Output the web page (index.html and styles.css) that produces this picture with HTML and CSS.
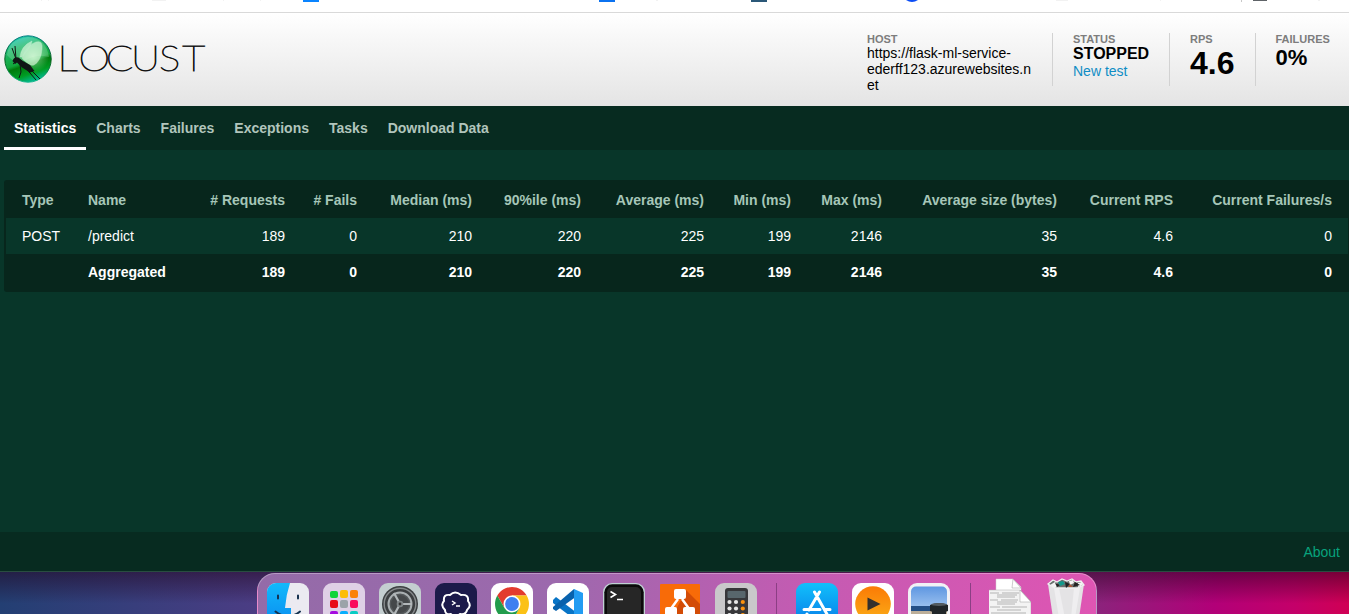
FILE: index.html
```
<!DOCTYPE html>
<html lang="en">
<head>
<meta charset="utf-8">
<title>Locust</title>
<link rel="stylesheet" href="styles.css">
</head>
<body>
<div class="screen">
  <div class="bookmarks">
    <svg class="bookmark-edges" viewBox="0 0 1349 3" shape-rendering="crispEdges">
      <path fill="#f2f2f2" d="M41 0h1v1h-1zM48 0h1v1h-1zM152 0h14v1h-14zM223 0h1v1h-1zM260 0h1v1h-1zM656 0h2v1h-2zM1056 0h12v1h-12zM1160 0h1v1h-1zM1318 0h2v1h-2z"/>
      <path fill="#0a84ff" d="M303 0h16v2h-16z"/>
      <path fill="#0b72f0" d="M599 0h16v2h-16z"/>
      <path fill="#2b5878" d="M751 0h16v2h-16z"/>
      <path fill="#0b4df5" shape-rendering="auto" d="M906 0h12q-6 4-12 0z"/>
      <path fill="#c8c8c8" d="M1241 0h1v2h-1z"/>
      <path fill="#5f6368" d="M1253 0h14v1h-14z"/>
    </svg>
  </div>
  <header class="top">
    <svg class="logo" width="206" height="60" viewBox="0 0 206 60">
      <defs>
        <linearGradient id="orb" x1=".25" y1="0" x2=".6" y2="1">
          <stop offset="0" stop-color="#20c9bd"/><stop offset=".25" stop-color="#20b96a"/>
          <stop offset=".56" stop-color="#12a63b"/><stop offset=".63" stop-color="#007a0c"/>
          <stop offset=".82" stop-color="#009c24"/><stop offset="1" stop-color="#00bd9d"/>
        </linearGradient>
        <radialGradient id="shine" cx=".62" cy=".45" r=".36">
          <stop offset="0" stop-color="#b7f3bd" stop-opacity=".75"/><stop offset="1" stop-color="#7bde98" stop-opacity="0"/>
        </radialGradient>
        <linearGradient id="rim" x1="0" y1="0" x2="0" y2="1">
          <stop offset="0" stop-color="#087f86"/><stop offset=".55" stop-color="#035c18"/><stop offset="1" stop-color="#17b98d"/>
        </linearGradient>
      </defs>
      <circle cx="28" cy="29" r="23.2" fill="url(#orb)" stroke="url(#rim)" stroke-width="1"/>
      <circle cx="28" cy="29" r="22" fill="url(#shine)"/>
      <path fill="#fff" opacity=".18" d="M7 25Q9 9 28 7Q46 8 49 27Q36 24 28 29Q17 37 7 25z"/>
      <path fill="#dffbe0" opacity=".65" stroke="#f2fff2" stroke-width=".5" d="M20 27Q21 16 32 11Q32 15 22 27zM22 28Q27 15 36 12Q43 10 42 19Q41 31 34 35Q30 37 22 28z"/>
      <path fill="#101615" d="M12.5 31Q14 26 18.5 27.500L23 31L30 35L34.500 41L30 42.500L22 37.500L17 32.500L15 34z"/>
      <path fill="none" stroke="#101615" stroke-width="1" d="M16 29L12 18M16 29L15 16M20 34L21 42L19 48M24 36L36 50M28 37L40 49M17 31L13 34"/>
      <g class="wordmark" transform="translate(0 41.3) scale(1.12 1)"><text x="51.300 70 94.500 117 142 162.700">LOCUST</text></g>
    </svg>
    <div class="boxes">
      <div class="box host"><div class="label">HOST</div><div class="url">https://flask-ml-service-ederff123.azurewebsites.net</div></div>
      <div class="box status"><div class="label">STATUS</div><div class="state">STOPPED</div><a class="new-test">New test</a></div>
      <div class="box rps"><div class="label">RPS</div><div class="rps-value">4.6</div></div>
      <div class="box fails"><div class="label">FAILURES</div><div class="fail-value">0%</div></div>
    </div>
  </header>
  <nav class="tabs">
    <a class="tab active">Statistics</a><a class="tab">Charts</a><a class="tab">Failures</a><a class="tab">Exceptions</a><a class="tab">Tasks</a><a class="tab">Download Data</a>
  </nav>
  <main class="content">
    <div class="table-frame">
    <table class="stats">
      <colgroup><col class="c-type"><col class="c-name"><col class="c-req"><col class="c-fail"><col class="c-med"><col class="c-90"><col class="c-avg"><col class="c-min"><col class="c-max"><col class="c-size"><col class="c-rps"><col class="c-fps"></colgroup>
      <thead><tr><th class="left">Type</th><th class="left">Name</th><th># Requests</th><th># Fails</th><th>Median (ms)</th><th>90%ile (ms)</th><th>Average (ms)</th><th>Min (ms)</th><th>Max (ms)</th><th>Average size (bytes)</th><th>Current RPS</th><th>Current Failures/s</th></tr></thead>
      <tbody>
        <tr><td class="left">POST</td><td class="left">/predict</td><td>189</td><td>0</td><td>210</td><td>220</td><td>225</td><td>199</td><td>2146</td><td>35</td><td>4.6</td><td>0</td></tr>
        <tr class="total"><td></td><td class="left">Aggregated</td><td>189</td><td>0</td><td>210</td><td>220</td><td>225</td><td>199</td><td>2146</td><td>35</td><td>4.6</td><td>0</td></tr>
      </tbody>
    </table>
    </div>
  </main>
  <footer class="foot"><a>About</a></footer>
  <div class="desktop">
    <div class="dock">
      <svg class="icon" viewBox="0 0 42 35">
        <defs><linearGradient id="fb" x2="0" y2="1"><stop stop-color="#12b9fb"/><stop offset="1" stop-color="#0a8cf0"/></linearGradient>
        <clipPath id="tile"><rect width="42" height="42" rx="9"/></clipPath></defs>
        <g clip-path="url(#tile)"><rect width="42" height="42" fill="#ebeaf1"/><path fill="url(#fb)" d="M0 0H23Q19 12 18 25H24V42H0z"/></g>
        <path stroke="#153250" stroke-width="2" stroke-linecap="round" fill="none" d="M11 12.5v3M31 12.5v3M8.5 28.5Q21 38 33 28.5"/>
      </svg>
      <svg class="icon" viewBox="0 0 42 35">
        <rect width="42" height="42" rx="9" fill="#dfd0e6"/>
        <g><rect x="7" y="8" width="8" height="7" rx="2" fill="#10d438"/><rect x="17" y="7" width="8" height="8" rx="2" fill="#fdbd09"/><rect x="27" y="7" width="8" height="8" rx="2" fill="#fb8208"/>
        <rect x="7" y="17" width="8" height="8" rx="2" fill="#e80a18"/><rect x="17" y="17" width="8" height="8" rx="2" fill="#9ba3a9"/><rect x="27" y="17" width="8" height="8" rx="2" fill="#fa0a5c"/>
        <rect x="7" y="28" width="8" height="8" rx="2" fill="#a50be0"/><rect x="17" y="28" width="8" height="8" rx="2" fill="#08aefc"/><rect x="27" y="28" width="8" height="8" rx="2" fill="#08ccc4"/></g>
      </svg>
      <svg class="icon" viewBox="0 0 42 35">
        <rect width="42" height="42" rx="9" fill="#c4ced0"/><circle cx="21" cy="21" r="18" fill="#3b3e40"/>
        <circle cx="21" cy="21" r="15.8" fill="none" stroke="#85898b" stroke-width="1.4"/>
        <circle cx="21" cy="21" r="11.5" fill="#54585a" stroke="#a9afb1" stroke-width="2"/><circle cx="21" cy="21" r="9" fill="#45484a"/>
        <path stroke="#b2b7b9" stroke-width="2.2" d="M21 21L15 10M21 21H33M21 21L15 32"/><circle cx="21" cy="21" r="3.3" fill="#808688"/><circle cx="21" cy="21" r="1.4" fill="#333"/>
      </svg>
      <svg class="icon" viewBox="0 0 42 35">
        <rect width="42" height="42" rx="9" fill="#1c1a4a"/><path fill="none" stroke="#fff" stroke-width="2" stroke-linejoin="round" d="M10 27Q5 22 9 18Q8 11 15 12Q20 7 26 12Q34 11 33 18Q37 23 32 27Q31 32 25 31Q20 36 16 31Q10 32 10 27z"/>
        <path fill="none" stroke="#fff" stroke-width="1.5" d="M17 18l3 2-3 2M21 23h4"/>
      </svg>
      <svg class="icon" viewBox="0 0 42 35">
        <rect width="42" height="42" rx="9" fill="#fff"/><g><path fill="#e33b2e" d="M6.3 12.5A17 17 0 0 1 35.7 12.5H21L13.6 25.3z"/><path fill="#fbc116" d="M35.7 12.5A17 17 0 0 1 21 38L28.4 25.3L21 12.5z"/><path fill="#229c4c" d="M6.3 12.5A17 17 0 0 0 21 38L28.4 25.3H13.6z"/><circle cx="21" cy="21" r="8.5" fill="#fff"/><circle cx="21" cy="21" r="6.9" fill="#3d7ff0"/></g>
      </svg>
      <svg class="icon" viewBox="0 0 42 35">
        <rect width="42" height="42" rx="9" fill="#fff"/><path fill="#0874c6" d="M6 17L9 14L30 30V36L27 36L6 20z"/><path fill="#0862ad" d="M6 24L27 6L30 13L9 28L6 26z"/><path fill="#229cf2" d="M27 6L36 10V33L27 37z"/>
      </svg>
      <svg class="icon" viewBox="0 0 42 35">
        <rect width="42" height="42" rx="9" fill="#bfd0d3"/><rect x="1.3" y="1.3" width="39.4" height="39.4" rx="8" fill="#0a0a0a"/><rect x="4" y="4" width="34" height="34" rx="5" fill="#262626"/>
        <path fill="none" stroke="#fff" stroke-width="1.6" d="M7.5 8.5l5 3-5 3M14 16.5h6"/>
      </svg>
      <svg class="icon" viewBox="0 0 42 35">
        <rect x="1" y="1" width="40" height="40" rx="1" fill="#f86b08"/><path fill="#d34c06" d="M27 7L41 21V36H12L22 17z"/><path fill="none" stroke="#fff" stroke-width="2.5" d="M19 16L11 27M23 16L31 27"/>
        <path fill="#fff" d="M17 6h8q2 0 2 2v6q0 2-2 2h-8q-2 0-2-2V8q0-2 2-2zM8 24h8q2 0 2 2v10H6V26q0-2 2-2zM26 24h8q2 0 2 2v10H24V26q0-2 2-2z"/>
      </svg>
      <svg class="icon" viewBox="0 0 42 35">
        <rect width="42" height="42" rx="9" fill="#c9c8ca"/><rect x="10" y="5" width="23" height="35" rx="3" fill="#37373a"/><rect x="12.5" y="8" width="18" height="7" rx="1" fill="#58666c"/>
        <g fill="#e7e7e7"><circle cx="14.5" cy="19" r="2.1"/><circle cx="21" cy="19" r="2.1"/><circle cx="14.5" cy="25.5" r="2.1"/><circle cx="21" cy="25.5" r="2.1"/><circle cx="14.5" cy="32" r="2.1"/><circle cx="21" cy="32" r="2.1"/></g>
        <g fill="#fb920d"><circle cx="27.8" cy="19" r="2.1"/><circle cx="27.8" cy="25.5" r="2.1"/><circle cx="27.8" cy="32" r="2.1"/></g>
      </svg>
      <span class="separator"></span>
      <svg class="icon" viewBox="0 0 42 35">
        <defs><linearGradient id="store" x2="0" y2="1"><stop stop-color="#11c0fb"/><stop offset="1" stop-color="#087be8"/></linearGradient></defs>
        <rect width="42" height="42" rx="9" fill="url(#store)"/><path fill="none" stroke="#fff" stroke-width="3" stroke-linecap="round" d="M18.5 9L32 33M23.5 9L13 27M8 26.5H24M29 26.5H34M11 31L10 33"/>
      </svg>
      <svg class="icon" viewBox="0 0 42 35">
        <defs><linearGradient id="play" x2="0" y2="1"><stop stop-color="#fb7a05"/><stop offset="1" stop-color="#fbad17"/></linearGradient></defs>
        <rect width="42" height="42" rx="9" fill="#fff"/><circle cx="21" cy="21" r="17.8" fill="url(#play)"/><path fill="#34302d" d="M15.5 14.5L28.5 21L15.5 27.5z"/>
      </svg>
      <svg class="icon" viewBox="0 0 42 35">
        <defs><linearGradient id="sky" x2="0" y2="1"><stop stop-color="#5e96e1"/><stop offset=".8" stop-color="#a5c8f1"/></linearGradient></defs>
        <rect width="42" height="42" rx="9" fill="#f1f1f5"/><rect x="3" y="3.5" width="36" height="30" rx="5" fill="url(#sky)"/><path fill="#244f86" d="M3 23h36v6H3z"/><path fill="#bcae99" d="M3 28h36v7H3z"/><path fill="#202528" d="M22 22q9-4 18 0v6q-9 4-18 0zM24 28h14v7H24z"/><ellipse cx="31" cy="21.5" rx="8" ry="1.5" fill="#555c60"/>
      </svg>
      <span class="separator second"></span>
      <svg class="icon tall" viewBox="0 -5 42 40">
        <path fill="#fff" stroke="#ccc" stroke-width=".5" d="M7-4H24L32 4V24H7z"/><path fill="#f3f3f3" stroke="#aaa" stroke-width=".5" d="M-1 7H31L42 19V36H-1z"/><path fill="#fff" stroke="#999" stroke-width=".5" d="M31 7V19H42zM24-4L23 5H32z"/>
        <path stroke="#999" stroke-width=".7" d="M1 10h9M13 10h17M8 12h20M8 14h18M1 17h8M12 17h17M8 19h20M8 21h18M1 24h10M13 24h25M8 27h24M2 30h35"/>
      </svg>
      <svg class="icon tall" viewBox="0 -5 42 40">
        <path fill="#e4e3e5" d="M3 1L8 35H34L39 1z"/><path fill="#efeef0" d="M9 5l5 30h6L14 5zM29 5l-3 30h4L35 5z"/>
        <path fill="#6b706f" stroke="#f1f1f1" stroke-width="1.3" d="M3 1L8-3L12-1L17-4L22-2L27-4L31-1L36-2L39 2L32 5H10z"/>
        <path fill="#f4f4f4" d="M5 2l5-3 3 3-3 3zM24-2l4-1 1 3-4 2zM33 0l4-1 1 3-5 2z"/>
        <path fill="#222" d="M10 0l5 2-3 2zM20-1l5 2-4 4zM30-1l5 3-7 2z"/><path fill="#12998b" d="M13-1l5-1 2 3-5 2z"/><path fill="#a75736" d="M25 1l3 3h-5z"/>
      </svg>
    </div>
  </div>
</div>
</body>
</html>
```
FILE: styles.css
```
* { box-sizing: border-box; }
body { margin: 0; font-family: "Liberation Sans", Arial, sans-serif; font-size: 14px; }
.screen { width: 1349px; height: 614px; overflow: hidden; display: flex; flex-direction: column; background: #083629; }
.bookmarks { height: 13px; background: #fff; border-bottom: 1px solid #d9d9d9; }
.bookmark-edges { display: block; width: 1349px; height: 3px; }
.top { height: 93px; display: flex; justify-content: space-between; background: linear-gradient(#fff, #e4e4e4); }
.logo { margin-top: 17px; }
.wordmark { font: 100 36px Lato, sans-serif; fill: #111; stroke: #111; stroke-width: .9px; }
.boxes { display: flex; padding-top: 20px; color: #000; }
.box { height: 53px; padding-left: 20px; border-left: 1px solid #d2d2d2; }
.host { width: 185px; padding-left: 0; border-left: 0; }
.status { width: 117px; }
.rps { width: 86px; }
.fails { width: 94px; padding-left: 19.5px; }
.label { height: 12px; font-size: 11px; line-height: 13px; font-weight: bold; color: #7d7d7d; }
.url { width: 165px; line-height: 16px; word-break: break-word; }
.state { font-size: 16px; line-height: 18px; font-weight: bold; }
.new-test { display: block; line-height: 16px; color: #108dc5; }
.rps-value { font-size: 32px; line-height: 36px; font-weight: bold; }
.fail-value { font-size: 22px; line-height: 25px; font-weight: bold; }
.tabs { height: 44px; padding-left: 4px; display: flex; background: #072b20; }
.tab { padding: 14px 10px 0; line-height: 16px; font-weight: bold; color: #b1c5bc; border-bottom: 3px solid transparent; }
.tab.active { color: #fff; border-color: #fff; }
.content { height: 382px; padding: 30px 0 0 4px; }
.table-frame { width: 1346px; height: 112px; padding: 2px; background: #07261c; border-radius: 3px; }
.stats { width: 1342px; table-layout: fixed; border-collapse: collapse; color: #fff; }
.stats tr { height: 36px; }
.stats th, .stats td { padding: 0 16px 0 8px; line-height: 16px; text-align: right; white-space: nowrap; }
.stats th { color: #a6c6b8; }
.stats .left { padding: 0 0 0 16px; text-align: left; }
.stats tbody tr { background: #083629; }
.stats tbody .total { background: #07261c; font-weight: bold; }
.c-type { width: 66px; }
.c-name { width: 116px; }
.c-req { width: 113px; }
.c-fail { width: 72px; }
.c-med { width: 115px; }
.c-90 { width: 109px; }
.c-avg { width: 123px; }
.c-min { width: 87px; }
.c-max { width: 91px; }
.c-size { width: 175px; }
.c-rps { width: 116px; }
.c-fps { width: 159px; }
.foot { height: 40px; padding: 12px 9px 0 0; text-align: right; line-height: 16px; color: #08a37d; background: #072b20; border-bottom: 1px solid #294d40; }
.desktop { height: 42px; padding: 1px 0 0 257px; background: linear-gradient(rgba(35,0,25,.5), transparent 75%), linear-gradient(90deg, #233f73 0, #4b3d84 19%, #8a247c 81%, #b20078 90%, #c40069 96%, #d00054 100%); }
.dock { width: 840px; height: 52px; padding: 10px 9px 0; display: flex; align-items: flex-start; gap: 14px; border: 1px solid rgba(255,255,255,.32); border-radius: 18px 18px 0 0; background: linear-gradient(100deg, #946ba8 0, #9c69ad 35%, #c45bb2 65%, #df55b3 100%); }
.icon { width: 42px; height: 35px; margin-top: -1px; flex: none; }
.icon.tall { height: 40px; margin-top: -6px; }
.separator { width: 1px; height: 40px; margin: -1px 5px 0; background: #8b3f84; flex: none; }
.separator.second { margin: -1px 4px 0 6px; }
```
